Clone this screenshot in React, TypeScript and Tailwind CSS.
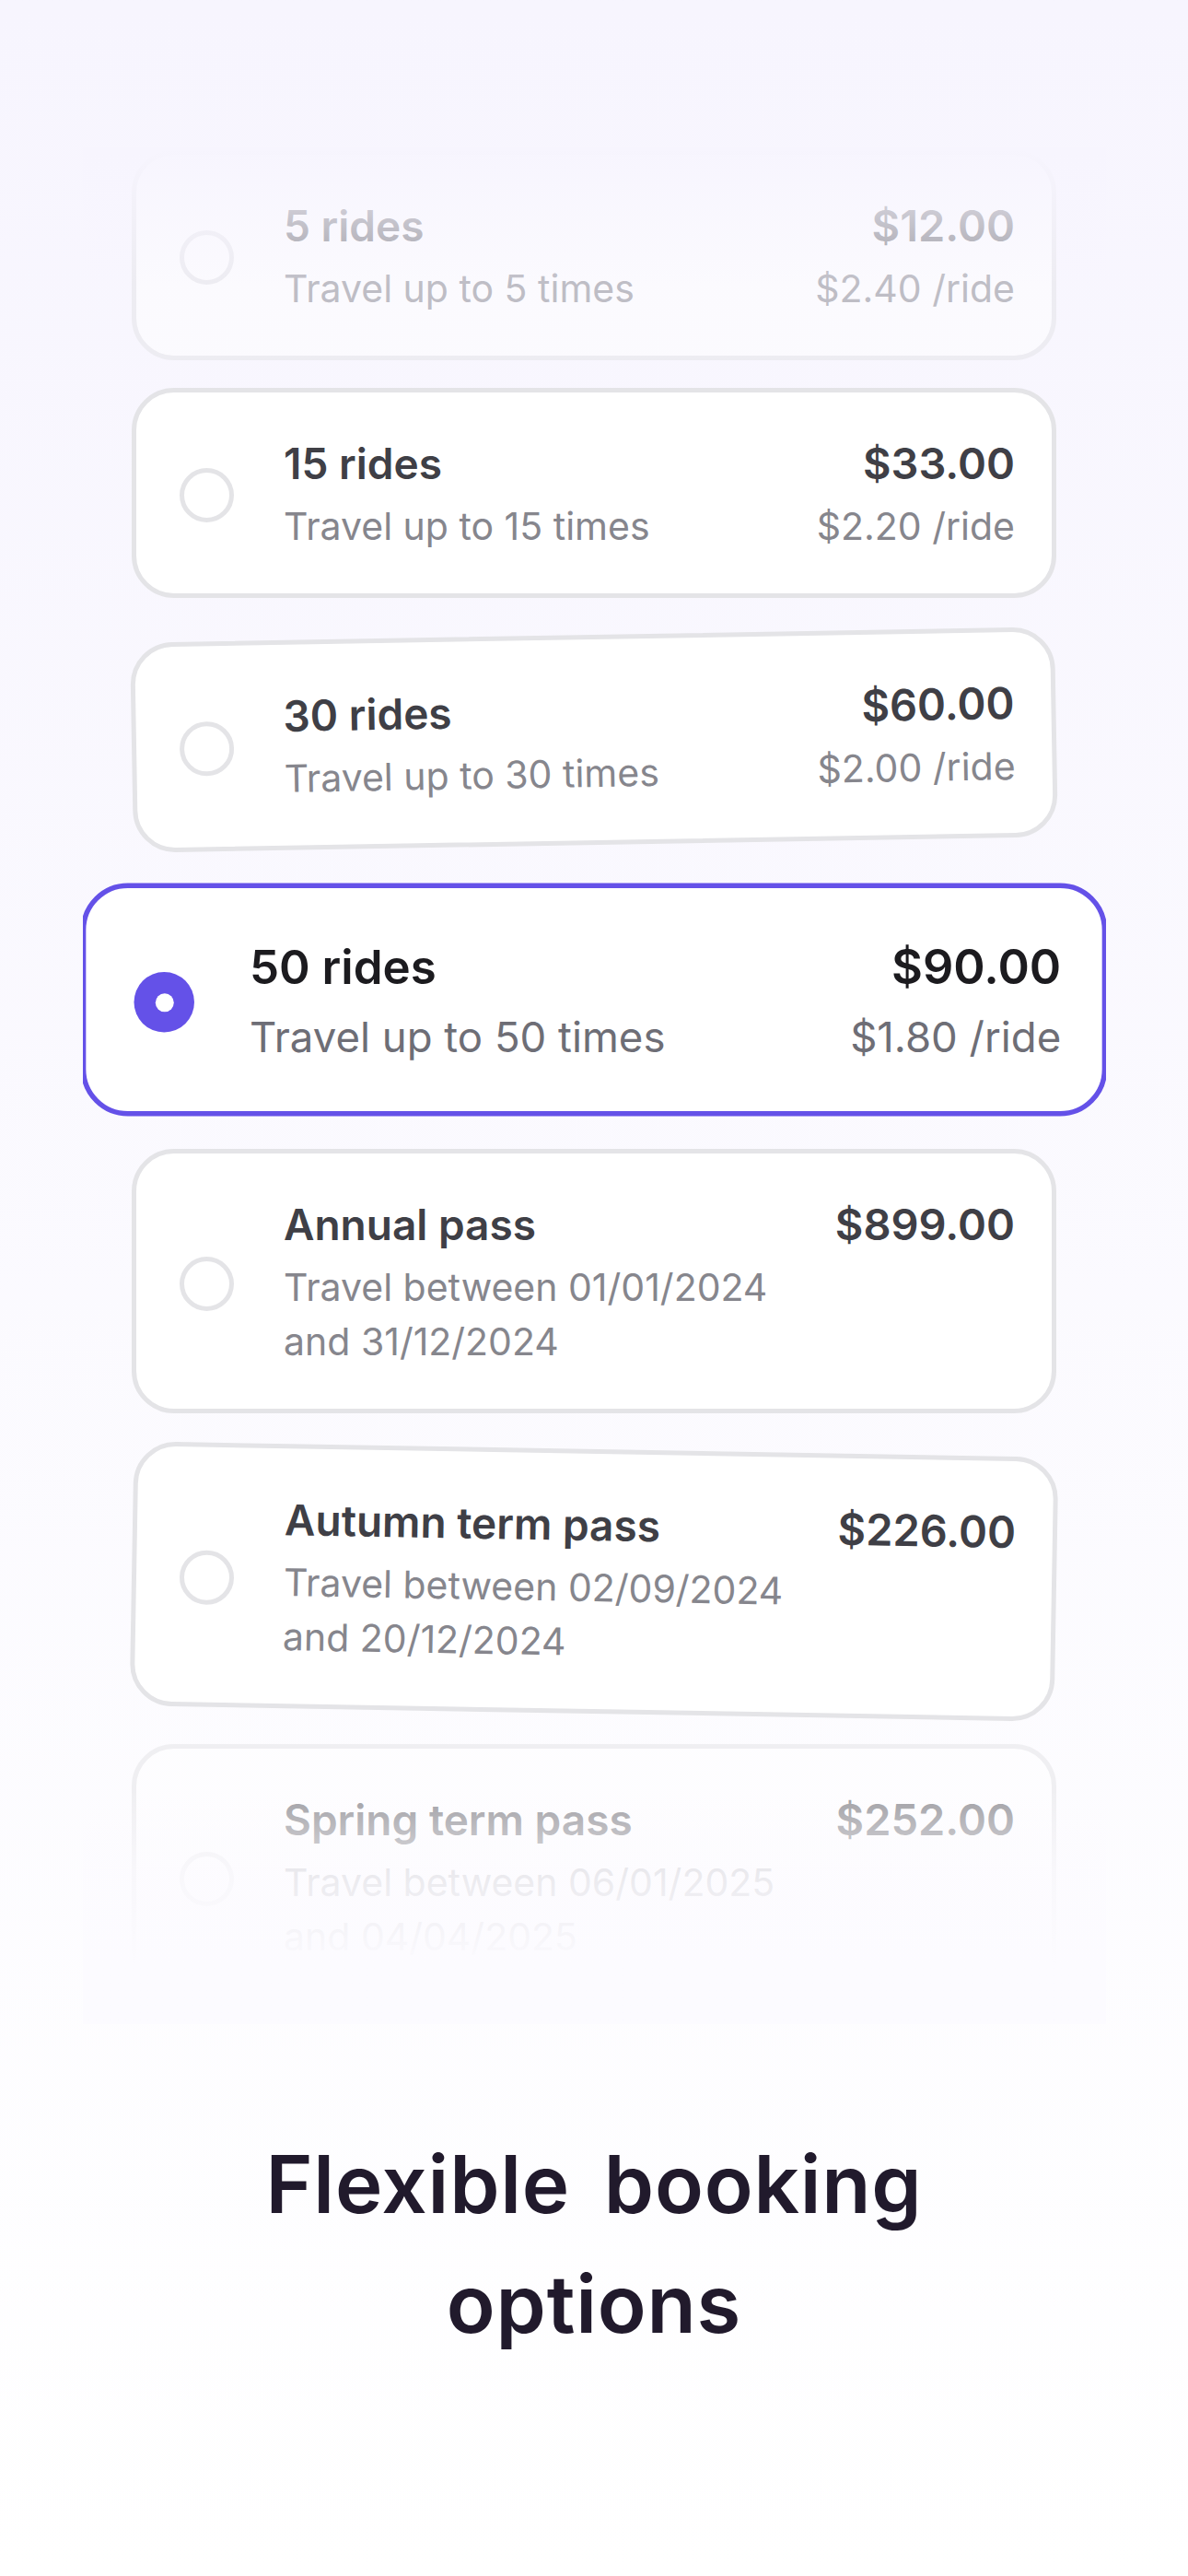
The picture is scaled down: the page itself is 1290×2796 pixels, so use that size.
type Plan = {
  id: string;
  title: string;
  price: string;
  sub: string[];
  perRide?: string;
  selected?: boolean;
  extra: string;
};

const plans: Plan[] = [
  { id: "5", title: "5 rides", price: "$12.00", sub: ["Travel up to 5 times"], perRide: "$2.40 /ride", extra: "mt-[3px] opacity-50" },
  { id: "15", title: "15 rides", price: "$33.00", sub: ["Travel up to 15 times"], perRide: "$2.20 /ride", extra: "mt-[30px]" },
  { id: "30", title: "30 rides", price: "$60.00", sub: ["Travel up to 30 times"], perRide: "$2.00 /ride", extra: "mt-[40px] -rotate-1" },
  { id: "50", title: "50 rides", price: "$90.00", sub: ["Travel up to 50 times"], perRide: "$1.80 /ride", selected: true, extra: "mt-[54px] scale-[1.11]" },
  { id: "annual", title: "Annual pass", price: "$899.00", sub: ["Travel between 01/01/2024", "and 31/12/2024"], extra: "mt-[48px]" },
  { id: "autumn", title: "Autumn term pass", price: "$226.00", sub: ["Travel between 02/09/2024", "and 20/12/2024"], extra: "mt-[39px] rotate-1" },
  { id: "spring", title: "Spring term pass", price: "$252.00", sub: ["Travel between 06/01/2025", "and 04/04/2025"], extra: "mt-[33px] opacity-50" },
];

function Radio({ on }: { on?: boolean }) {
  if (on) {
    return (
      <div className="flex h-[59px] w-[59px] shrink-0 items-center justify-center rounded-full bg-[#6451e8]">
        <div className="h-[18px] w-[18px] rounded-full bg-white" />
      </div>
    );
  }
  return <div className="h-[59px] w-[59px] shrink-0 rounded-full border-[5px] border-[#e4e4e7]" />;
}

function PlanCard({ p }: { p: Plan }) {
  const strong = p.selected ? "text-[#1c1b1f]" : "text-[#3f3f46]";
  const soft = p.selected ? "text-[#6e6e76]" : "text-[#86868d]";
  return (
    <div
      className={`mx-auto flex w-[1004px] items-center rounded-[46px] border-[5px] bg-white pb-[43px] pl-[47px] pr-[40px] pt-[48px] ${
        p.selected ? "border-[#6451e8]" : "border-[#e4e4e7]"
      } ${p.extra}`}
    >
      <Radio on={p.selected} />
      <div className="ml-[54px] flex flex-1 flex-col">
        <div className="flex items-baseline justify-between">
          <span className={`text-[46px] font-semibold leading-[58px] ${strong}`}>{p.title}</span>
          <span className={`text-[47px] font-semibold leading-[58px] ${strong}`}>{p.price}</span>
        </div>
        <div className={`mt-[10px] flex items-start justify-between text-[41px] leading-[59px] ${soft}`}>
          <div className="flex flex-col">
            {p.sub.map((line) => (
              <span key={line}>{line}</span>
            ))}
          </div>
          {p.perRide && <span>{p.perRide}</span>}
        </div>
      </div>
    </div>
  );
}

export default function App() {
  return (
    <div
      className="min-h-[2796px] w-full bg-linear-to-b from-[#f7f5fe] to-[#ffffff] pt-[160px]"
      style={{ fontFamily: "Inter, 'Noto Sans', sans-serif" }}
    >
      {/* plan list with faded edges */}
      <div className="relative mx-auto h-[2037px] w-[1111px] overflow-hidden">
        {plans.map((p) => (
          <PlanCard key={p.id} p={p} />
        ))}
        <div className="pointer-events-none absolute inset-x-0 top-0 h-[150px] bg-linear-to-b from-[#f7f5fe] to-[#f7f5fe]/0" />
        <div className="pointer-events-none absolute inset-x-0 bottom-0 h-[255px] bg-linear-to-b from-[#fcfbff]/0 from-0% via-[#fcfbff]/70 via-35% to-[#fcfbff] to-75%" />
      </div>

      <h1 className="mt-[109px] text-center text-[87px] font-semibold leading-[130px] tracking-[0.8px] text-[#211a2c] [word-spacing:14px]">
        Flexible booking
        <br />
        options
      </h1>
    </div>
  );
}
